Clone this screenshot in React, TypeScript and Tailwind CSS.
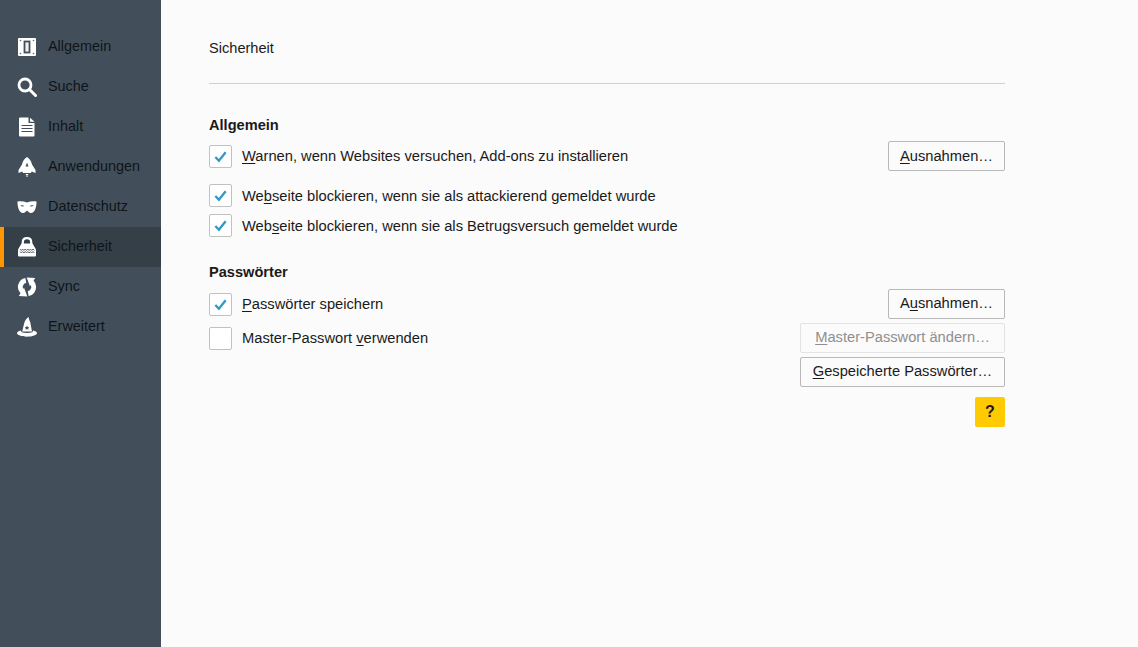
import type { ReactNode } from "react";

function GeneralIcon() {
  return (
    <svg viewBox="0 0 20 20" className="h-5 w-5">
      <rect x="1" y="1" width="18" height="18" rx="1" fill="#fff" />
      <rect x="7.500" y="4.500" width="5" height="11" fill="#eef0f1" stroke="#424f5a" strokeWidth="1.800" />
      <circle cx="3.500" cy="3.500" r="0.800" fill="#5d6973" />
      <circle cx="16.500" cy="3.500" r="0.800" fill="#5d6973" />
      <circle cx="3.500" cy="16.500" r="0.800" fill="#5d6973" />
      <circle cx="16.500" cy="16.500" r="0.800" fill="#5d6973" />
    </svg>
  );
}

function SearchIcon() {
  return (
    <svg viewBox="0 0 20 20" className="h-5 w-5">
      <circle cx="8" cy="8" r="6" fill="none" stroke="#fff" strokeWidth="2.800" />
      <path d="M12.500 12.500L18.500 18.500" stroke="#fff" strokeWidth="3" strokeLinecap="round" />
    </svg>
  );
}

function ContentIcon() {
  return (
    <svg viewBox="0 0 20 20" className="h-5 w-5">
      <path fill="#fff" d="M2 1.500a1 1 0 0 1 1-1h8.500V6h6v12.500a1 1 0 0 1-1 1H3a1 1 0 0 1-1-1zM13 .8l4.600 4H13z" />
      <path d="M4.500 8.500h11M4.500 11.500h11M4.500 14.500h11" stroke="#424f5a" strokeWidth="1.100" />
    </svg>
  );
}

function AppsIcon() {
  return (
    <svg viewBox="0 0 20 20" className="h-5 w-5">
      <path
        fillRule="evenodd"
        fill="#fff"
        d="M10 0c2.800 1.500 4.400 4.500 5 7.500L18.500 13v3l-3.800-1.500-.8 1.500H6.100l-.8-1.500L1.500 16v-3L5 7.500C5.600 4.500 7.200 1.500 10 0zM10 5.500L8.500 9.500h3z"
      />
      <rect x="8.800" y="17" width="2.400" height="1.400" fill="#fff" />
      <rect x="9.500" y="19" width="1" height="1" fill="#fff" />
    </svg>
  );
}

function PrivacyIcon() {
  return (
    <svg viewBox="0 0 20 20" className="h-5 w-5">
      <path
        fillRule="evenodd"
        fill="#fff"
        d="M.5 4.500c3-.6 6.500-.2 9.500 1 3-1.200 6.500-1.600 9.500-1 .2 6-2 11.500-5.500 11.500-2 0-3-1.600-4-2.500-1 .9-2 2.500-4 2.500C2.500 16 .3 10.500.5 4.500zM3.500 8.500c.8 1 2.700 1.200 4 .5-1-.8-3-1.100-4-.5zm13 0c-1-.6-3-.3-4 .5 1.300.7 3.200.5 4-.5z"
      />
    </svg>
  );
}

function SecurityIcon() {
  return (
    <svg viewBox="0 0 20 20" className="h-5 w-5">
      <path fill="none" stroke="#fff" strokeWidth="2.200" d="M5.800 7V5c0-2.400 1.800-3.900 4.200-3.900s4.200 1.500 4.200 3.900v2" />
      <path fill="#fff" d="M4.500 6.500h11l3.500 6v6a1 1 0 0 1-1 1H2a1 1 0 0 1-1-1v-6z" />
      <path
        d="M3 12l1.300 1.500L5.600 12l1.300 1.500L8.200 12l1.300 1.500 1.300-1.500 1.300 1.500 1.300-1.500 1.300 1.500 1.300-1.500 1.300 1.500M3 14.500l1.300 1.500 1.300-1.500 1.300 1.500 1.300-1.500 1.300 1.500 1.300-1.500 1.300 1.500 1.300-1.500 1.300 1.500 1.300-1.500 1.300 1.500"
        fill="none"
        stroke="#4b5660"
        strokeWidth="0.900"
      />
    </svg>
  );
}

function SyncIcon() {
  const half = (
    <>
      <path d="M8.800 3.400A6.700 6.700 0 0 0 5.300 14.700" fill="none" stroke="#fff" strokeWidth="4.800" />
      <path fill="#fff" d="M7 10.800L10.300 19.600L1.800 19z" />
    </>
  );
  return (
    <svg viewBox="0 0 20 20" className="h-5 w-5">
      {half}
      <g transform="rotate(180 10 10)">{half}</g>
    </svg>
  );
}

function AdvancedIcon() {
  return (
    <svg viewBox="0 0 20 20" className="h-5 w-5">
      <path
        fillRule="evenodd"
        fill="#fff"
        d="M12 0c-.8 2 .6 3 1.200 5l1.800 9.500H5.200L7 7c.6-3 2.500-6 5-7zM10 8.500l-.7 1.500-1.500.2 1 1.100-.3 1.500 1.500-.7 1.500.7-.3-1.500 1-1.100-1.500-.2z"
      />
      <path fill="#fff" d="M3.800 13.600l.9 1.700c3 1 7.600 1 10.600 0l.9-1.700c2 .5 3.800 1.400 3.800 2.400 0 2-4.500 3.700-10 3.700S0 18 0 16c0-1 1.800-1.900 3.800-2.400z" />
    </svg>
  );
}

const navItems = [
  { label: "Allgemein", icon: <GeneralIcon /> },
  { label: "Suche", icon: <SearchIcon /> },
  { label: "Inhalt", icon: <ContentIcon /> },
  { label: "Anwendungen", icon: <AppsIcon /> },
  { label: "Datenschutz", icon: <PrivacyIcon /> },
  { label: "Sicherheit", icon: <SecurityIcon />, active: true },
  { label: "Sync", icon: <SyncIcon /> },
  { label: "Erweitert", icon: <AdvancedIcon /> },
];

function Checkbox({ checked, label }: { checked: boolean; label: ReactNode }) {
  return (
    <div className="flex items-center">
      <div className="flex h-[23px] w-[23px] shrink-0 items-center justify-center rounded-[2px] border border-[#c1c1c1] bg-white">
        {checked && (
          <svg viewBox="0 0 16 16" className="h-[15px] w-[15px]">
            <path d="M2.500 8.500L6.300 12.500L13.500 3.500" fill="none" stroke="#3198c8" strokeWidth="2.500" />
          </svg>
        )}
      </div>
      <span className="ml-[10px]">{label}</span>
    </div>
  );
}

function Button({ children, width, disabled }: { children: ReactNode; width: string; disabled?: boolean }) {
  return (
    <div
      className={`flex h-[30px] items-center justify-center rounded-[2px] border pb-[3px] ${width} ${
        disabled ? "border-[#e3e3e3] text-[#8f8f8f]" : "border-[#b8b8b8] text-[#1a1a1a]"
      }`}
    >
      {children}
    </div>
  );
}

export default function App() {
  return (
    <div className="flex h-[647px] w-[1138px] overflow-hidden bg-[#fbfbfb] font-['Liberation_Sans',Arial,sans-serif] text-[14.7px] leading-[20px] text-[#1a1a1a] [&_u]:underline-offset-2">
      <aside className="w-[161px] shrink-0 bg-[#424f5a] pt-[27px]">
        <nav>
          {navItems.map((item) => (
            <div
              key={item.label}
              className={`flex h-10 items-center border-l-4 pl-[13px] text-[14.4px] text-[#0f1419] ${
                item.active ? "border-[#ff9500] bg-[#343f48]" : "border-transparent"
              }`}
            >
              <span className="flex w-[20px] justify-center">{item.icon}</span>
              <span className="ml-[11px] -mt-[2px]">{item.label}</span>
            </div>
          ))}
        </nav>
      </aside>

      <main className="ml-[48px] w-[796px] pt-[38px]">
        <h1 className="text-[14.6px] font-normal">Sicherheit</h1>
        <div className="mt-[25px] h-px bg-[#d0d0d0]" />

        <h2 className="mt-[31px] text-[14.6px] font-bold">Allgemein</h2>
        <div className="mt-[6px] flex items-center justify-between">
          <Checkbox
            checked
            label={
              <>
                <u>W</u>arnen, wenn Websites versuchen, Add-ons zu installieren
              </>
            }
          />
          <Button width="w-[117px]">
            <span className="mt-[2px]">
              <u>A</u>usnahmen…
            </span>
          </Button>
        </div>
        <div className="mt-[13px] flex flex-col gap-[7px]">
          <Checkbox
            checked
            label={
              <>
                We<u>b</u>seite blockieren, wenn sie als attackierend gemeldet wurde
              </>
            }
          />
          <Checkbox
            checked
            label={
              <>
                Web<u>s</u>eite blockieren, wenn sie als Betrugsversuch gemeldet wurde
              </>
            }
          />
        </div>

        <h2 className="mt-[25px] text-[14.6px] font-bold">Passwörter</h2>
        <div className="mt-[7px] flex items-center justify-between">
          <Checkbox
            checked
            label={
              <>
                <u>P</u>asswörter speichern
              </>
            }
          />
          <Button width="w-[117px]">
            <span>
              A<u>u</u>snahmen…
            </span>
          </Button>
        </div>
        <div className="mt-[4px] flex items-start justify-between">
          <div className="mt-[4px]">
            <Checkbox
              checked={false}
              label={
                <span className="-mt-px block">
                  Master-Passwort <u>v</u>erwenden
                </span>
              }
            />
          </div>
          <div className="flex flex-col items-end gap-[4px]">
            <Button width="w-[205px]" disabled>
              <span>
                <u>M</u>aster-Passwort ändern…
              </span>
            </Button>
            <Button width="w-[205px]">
              <span>
                <u>G</u>espeicherte Passwörter…
              </span>
            </Button>
            <div className="mt-[6px] flex h-[30px] w-[30px] items-center justify-center rounded-[2px] bg-[#ffcb00] text-[16px] font-bold text-[#1a1a1a]">
              ?
            </div>
          </div>
        </div>
      </main>
    </div>
  );
}
